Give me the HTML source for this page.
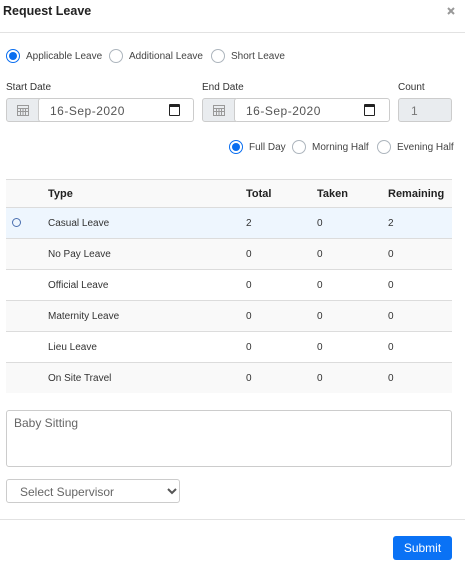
<!DOCTYPE html>
<html><head><style>
*{box-sizing:border-box;margin:0;padding:0}
body{width:465px;height:570px;background:#fff;font-family:"Liberation Sans",sans-serif;color:#333;position:relative;overflow:hidden;font-size:10px}
.a{position:absolute}
.rad{position:absolute;width:14px;height:14px;border:1px solid #adb5bd;border-radius:50%;background:#fff}
.rad.on{border-color:#0a6ef0;background:#fff}
.rad.on::after{content:"";position:absolute;left:2px;top:2px;width:8px;height:8px;border-radius:50%;background:#0a6ef0}
.lbl{position:absolute;font-size:10px;color:#444}
.inp{position:absolute;border:1px solid #ccc;border-radius:3px;background:#fff}
.grp{position:absolute;background:#e9ecef;border:1px solid #ccc;border-radius:3px 0 0 3px}
.row{position:absolute;left:6px;width:446px;height:31px;border-bottom:1px solid #dcdcdc;font-size:10px}
.row span{position:absolute;top:10px}
</style></head><body>
<div class="a" style="left:3px;top:4px;font-size:12.5px;font-weight:bold;color:#222">Request Leave</div>
<svg class="a" style="left:447px;top:7px" width="8" height="8"><path d="M1 1L7 7M7 1L1 7" stroke="#999" stroke-width="2"/></svg>
<div class="a" style="left:0;top:32px;width:465px;height:1px;background:#e2e2e2"></div>

<div class="rad on" style="left:6px;top:49px"></div><div class="lbl" style="left:26px;top:51px">Applicable Leave</div>
<div class="rad" style="left:109px;top:49px"></div><div class="lbl" style="left:129px;top:51px">Additional Leave</div>
<div class="rad" style="left:211px;top:49px"></div><div class="lbl" style="left:231px;top:51px">Short Leave</div>

<div class="lbl" style="left:6px;top:82px;color:#333">Start Date</div>
<div class="lbl" style="left:202px;top:82px;color:#333">End Date</div>
<div class="lbl" style="left:398px;top:82px;color:#333">Count</div>

<div class="grp" style="left:6px;top:98px;width:34px;height:24px"><svg class="a" style="left:10px;top:6px" width="12" height="11"><rect x="0.5" y="0.5" width="11" height="10" fill="none" stroke="#999"/><path d="M0 3.5H12M0 6.5H12M3.5 3V11M6 3V11M8.5 3V11" stroke="#999" stroke-width="1"/></svg></div>
<div class="inp" style="left:38px;top:98px;width:156px;height:24px"><span class="a" style="left:11px;top:5px;font-size:12px;color:#555;letter-spacing:.5px">16-Sep-2020</span><span class="a" style="left:130px;top:5px;width:11px;height:12px;border:1.5px solid #222;border-top-width:3px;border-radius:1px"></span></div>
<div class="grp" style="left:202px;top:98px;width:34px;height:24px"><svg class="a" style="left:10px;top:6px" width="12" height="11"><rect x="0.5" y="0.5" width="11" height="10" fill="none" stroke="#999"/><path d="M0 3.5H12M0 6.5H12M3.5 3V11M6 3V11M8.5 3V11" stroke="#999" stroke-width="1"/></svg></div>
<div class="inp" style="left:234px;top:98px;width:156px;height:24px"><span class="a" style="left:11px;top:5px;font-size:12px;color:#555;letter-spacing:.5px">16-Sep-2020</span><span class="a" style="left:129px;top:5px;width:11px;height:12px;border:1.5px solid #222;border-top-width:3px;border-radius:1px"></span></div>
<div class="inp" style="left:398px;top:98px;width:54px;height:24px;background:#e9ecef"><span class="a" style="left:12px;top:5px;font-size:12px;color:#777">1</span></div>

<div class="rad on" style="left:229px;top:140px"></div><div class="lbl" style="left:249px;top:142px">Full Day</div>
<div class="rad" style="left:292px;top:140px"></div><div class="lbl" style="left:312px;top:142px">Morning Half</div>
<div class="rad" style="left:377px;top:140px"></div><div class="lbl" style="left:397px;top:142px">Evening Half</div>

<div class="row" style="top:179px;height:29px;background:#f9f9f9;border-top:1px solid #dcdcdc;font-weight:bold;color:#222;font-size:11px"><span style="left:42px;top:8px">Type</span><span style="left:240px;top:8px">Total</span><span style="left:311px;top:8px">Taken</span><span style="left:382px;top:8px">Remaining</span></div>
<div class="row" style="top:208px;background:#eef6fe"><span style="left:6px;top:10px;width:9px;height:9px;border:1px solid #4a6fb0;border-radius:50%"></span><span style="left:42px">Casual Leave</span><span style="left:240px">2</span><span style="left:311px">0</span><span style="left:382px">2</span></div>
<div class="row" style="top:239px;background:#f9f9f9"><span style="left:42px">No Pay Leave</span><span style="left:240px">0</span><span style="left:311px">0</span><span style="left:382px">0</span></div>
<div class="row" style="top:270px"><span style="left:42px">Official Leave</span><span style="left:240px">0</span><span style="left:311px">0</span><span style="left:382px">0</span></div>
<div class="row" style="top:301px;background:#f9f9f9"><span style="left:42px">Maternity Leave</span><span style="left:240px">0</span><span style="left:311px">0</span><span style="left:382px">0</span></div>
<div class="row" style="top:332px"><span style="left:42px">Lieu Leave</span><span style="left:240px">0</span><span style="left:311px">0</span><span style="left:382px">0</span></div>
<div class="row" style="top:363px;background:#f9f9f9;height:30px;border-bottom:none"><span style="left:42px">On Site Travel</span><span style="left:240px">0</span><span style="left:311px">0</span><span style="left:382px">0</span></div>

<div class="inp" style="left:6px;top:410px;width:446px;height:57px"><span class="a" style="left:7px;top:5px;font-size:12px;color:#666">Baby Sitting</span></div>
<div class="inp" style="left:6px;top:479px;width:174px;height:24px"><span class="a" style="left:13px;top:5px;font-size:12px;color:#666">Select Supervisor</span><svg class="a" style="left:160px;top:8px" width="10" height="7"><path d="M1 1L5 5L9 1" fill="none" stroke="#555" stroke-width="2"/></svg></div>
<div class="a" style="left:0;top:519px;width:465px;height:1px;background:#e2e2e2"></div>
<div class="a" style="left:393px;top:536px;width:59px;height:24px;background:#0a72f5;border-radius:3px;color:#fff;font-size:12px;text-align:center;line-height:24px">Submit</div>
</body></html>
